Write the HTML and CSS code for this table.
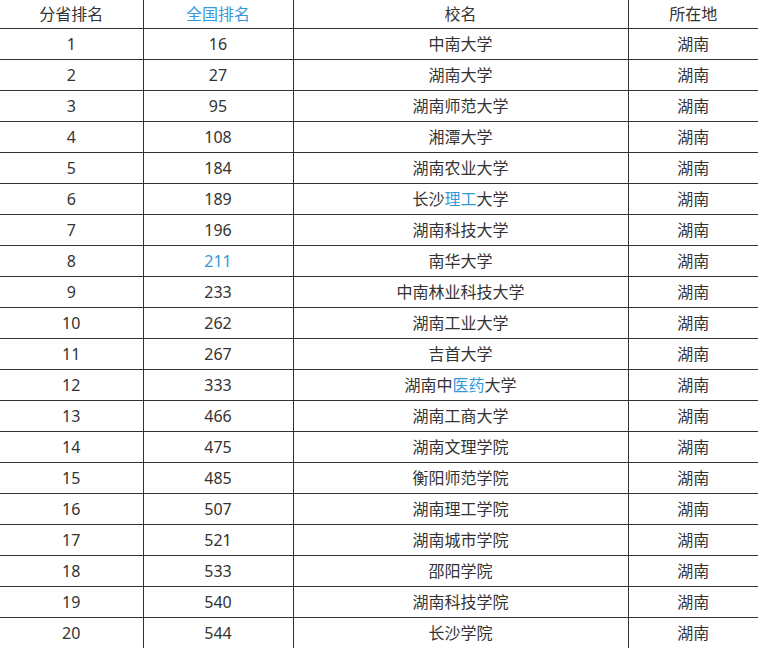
FILE: index.html
```html
<!DOCTYPE html>
<html lang="zh-CN">
<head>
<meta charset="utf-8">
<title>湖南高校排名</title>
<link rel="stylesheet" href="styles.css">
</head>
<body>
<table class="rank">
  <colgroup>
    <col class="c1"><col class="c2"><col class="c3"><col class="c4">
  </colgroup>
  <thead>
    <tr><th>分省排名</th><th class="link">全国排名</th><th>校名</th><th>所在地</th></tr>
  </thead>
  <tbody>
    <tr><td>1</td><td>16</td><td>中南大学</td><td>湖南</td></tr>
    <tr><td>2</td><td>27</td><td>湖南大学</td><td>湖南</td></tr>
    <tr><td>3</td><td>95</td><td>湖南师范大学</td><td>湖南</td></tr>
    <tr><td>4</td><td>108</td><td>湘潭大学</td><td>湖南</td></tr>
    <tr><td>5</td><td>184</td><td>湖南农业大学</td><td>湖南</td></tr>
    <tr><td>6</td><td>189</td><td>长沙<span class="link">理工</span>大学</td><td>湖南</td></tr>
    <tr><td>7</td><td>196</td><td>湖南科技大学</td><td>湖南</td></tr>
    <tr><td>8</td><td class="link">211</td><td>南华大学</td><td>湖南</td></tr>
    <tr><td>9</td><td>233</td><td>中南林业科技大学</td><td>湖南</td></tr>
    <tr><td>10</td><td>262</td><td>湖南工业大学</td><td>湖南</td></tr>
    <tr><td>11</td><td>267</td><td>吉首大学</td><td>湖南</td></tr>
    <tr><td>12</td><td>333</td><td>湖南中<span class="link">医药</span>大学</td><td>湖南</td></tr>
    <tr><td>13</td><td>466</td><td>湖南工商大学</td><td>湖南</td></tr>
    <tr><td>14</td><td>475</td><td>湖南文理学院</td><td>湖南</td></tr>
    <tr><td>15</td><td>485</td><td>衡阳师范学院</td><td>湖南</td></tr>
    <tr><td>16</td><td>507</td><td>湖南理工学院</td><td>湖南</td></tr>
    <tr><td>17</td><td>521</td><td>湖南城市学院</td><td>湖南</td></tr>
    <tr><td>18</td><td>533</td><td>邵阳学院</td><td>湖南</td></tr>
    <tr><td>19</td><td>540</td><td>湖南科技学院</td><td>湖南</td></tr>
    <tr><td>20</td><td>544</td><td>长沙学院</td><td>湖南</td></tr>
  </tbody>
</table>
</body>
</html>
```
FILE: styles.css
```css
html, body {
  margin: 0;
  padding: 0;
  background: #ffffff;
}
.rank {
  width: 758px;
  table-layout: fixed;
  border-collapse: collapse;
  font-family: "Noto Sans", "Noto Sans CJK SC", sans-serif;
  font-size: 16px;
  font-weight: 400;
  color: #333333;
}
.c1 { width: 143px; }
.c2 { width: 150px; }
.c3 { width: 335px; }
.c4 { width: 130px; }
.rank th, .rank td {
  padding: 0;
  text-align: center;
  font-weight: 400;
  border-bottom: 1px solid #333333;
  border-right: 1px solid #333333;
  line-height: 20px;
}
.rank th:last-child, .rank td:last-child {
  border-right: none;
}
.rank thead tr { height: 28px; }
.rank tbody tr { height: 31px; }
.link { color: #3399dd; }
```
